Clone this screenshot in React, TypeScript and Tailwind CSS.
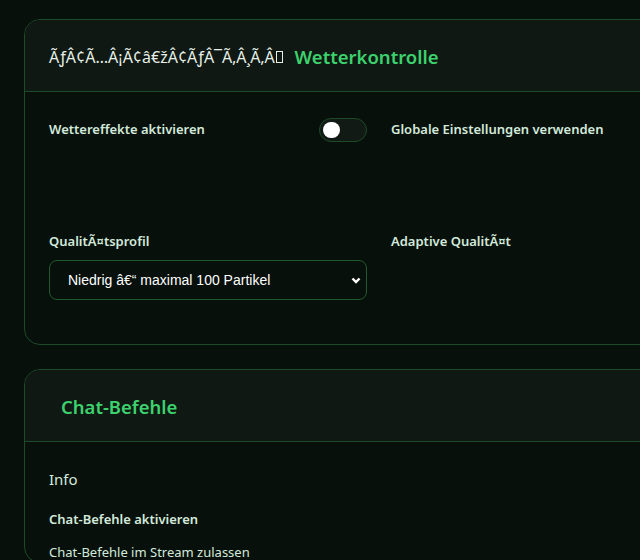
const garbledIcon = "ÃƒÂ¢Ã…Â¡Ã¢â€žÂ¢ÃƒÂ¯Ã‚Â¸Ã‚Â";

function Toggle() {
  return (
    <span className="inline-flex h-6 w-12 shrink-0 items-center rounded-full border border-[#1d4a29] bg-[#111a14] px-[3px]">
      <span className="h-4 w-[17px] rounded-full bg-white" />
    </span>
  );
}

function CardHeader({ icon, title }: { icon?: string; title: string }) {
  return (
    <div className="flex h-[72px] items-center gap-3 border-b border-[#1d4a29] bg-[#0f1812] px-6 pt-[3px]">
      <span className="flex items-center text-base text-[#e6efe8]">
        {icon}
        {/* missing-glyph box at the end of the broken emoji */}
        {icon && <span className="ml-px inline-block h-[12px] w-[7px] border border-[#e6efe8]" />}
      </span>
      <h2 className="text-[18.5px] font-semibold text-[#3dd16e]">{title}</h2>
    </div>
  );
}

export default function App() {
  return (
    <div
      className="h-[560px] w-[640px] overflow-hidden bg-[#08100b]"
      style={{ fontFamily: '"Noto Sans", "Open Sans", sans-serif' }}
    >
      <div className="flex w-[734px] flex-col gap-6 pl-6 pt-[19px]">
        {/* Weather controls */}
        <section className="overflow-hidden rounded-2xl border border-[#1d4a29]">
          <CardHeader icon={garbledIcon} title="Wetterkontrolle" />
          <div className="grid grid-cols-2 items-start gap-x-6 px-6 pb-11 pt-[26px]">
            <div className="flex h-6 items-center justify-between">
              <span className="text-[13px] font-semibold text-[#d3eadb]">Wettereffekte aktivieren</span>
              <Toggle />
            </div>
            <div className="flex h-6 items-center">
              <span className="text-[13px] font-semibold text-[#d3eadb]">Globale Einstellungen verwenden</span>
            </div>

            <div className="mt-[90px] flex flex-col gap-2">
              <label className="block text-[13px] font-semibold text-[#d3eadb]">QualitÃ¤tsprofil</label>
              <div className="relative">
                <select
                  defaultValue="low"
                  className="h-10 w-full appearance-none rounded-lg border border-[#1f5a2c] bg-[#08100b] pl-[18px] text-sm text-white outline-none"
                  style={{ fontFamily: '"Liberation Sans", Arial, sans-serif' }}
                >
                  <option value="low">Niedrig â€“ maximal 100 Partikel</option>
                </select>
                <svg
                  className="pointer-events-none absolute right-[5px] top-1/2 h-3 w-3 -translate-y-1/2 text-white"
                  viewBox="0 0 12 12"
                  fill="none"
                  stroke="currentColor"
                  strokeWidth="2.4"
                >
                  <path d="M2.5 4.5 6 8l3.5-3.5" />
                </svg>
              </div>
            </div>
            <div className="mt-[90px]">
              <span className="block text-[13px] font-semibold text-[#d3eadb]">Adaptive QualitÃ¤t</span>
            </div>
          </div>
        </section>

        {/* Chat commands */}
        <section className="overflow-hidden rounded-2xl border border-[#1d4a29]">
          <CardHeader title="Chat-Befehle" />
          <div className="flex flex-col px-6 pt-[26px]">
            <h3 className="text-[15px] text-[#d3eadb]">Info</h3>
            <span className="mt-5 text-[13px] font-semibold text-[#d3eadb]">Chat-Befehle aktivieren</span>
            <span className="mt-[13px] text-[13px] text-[#d3eadb]">Chat-Befehle im Stream zulassen</span>
          </div>
        </section>
      </div>
    </div>
  );
}
